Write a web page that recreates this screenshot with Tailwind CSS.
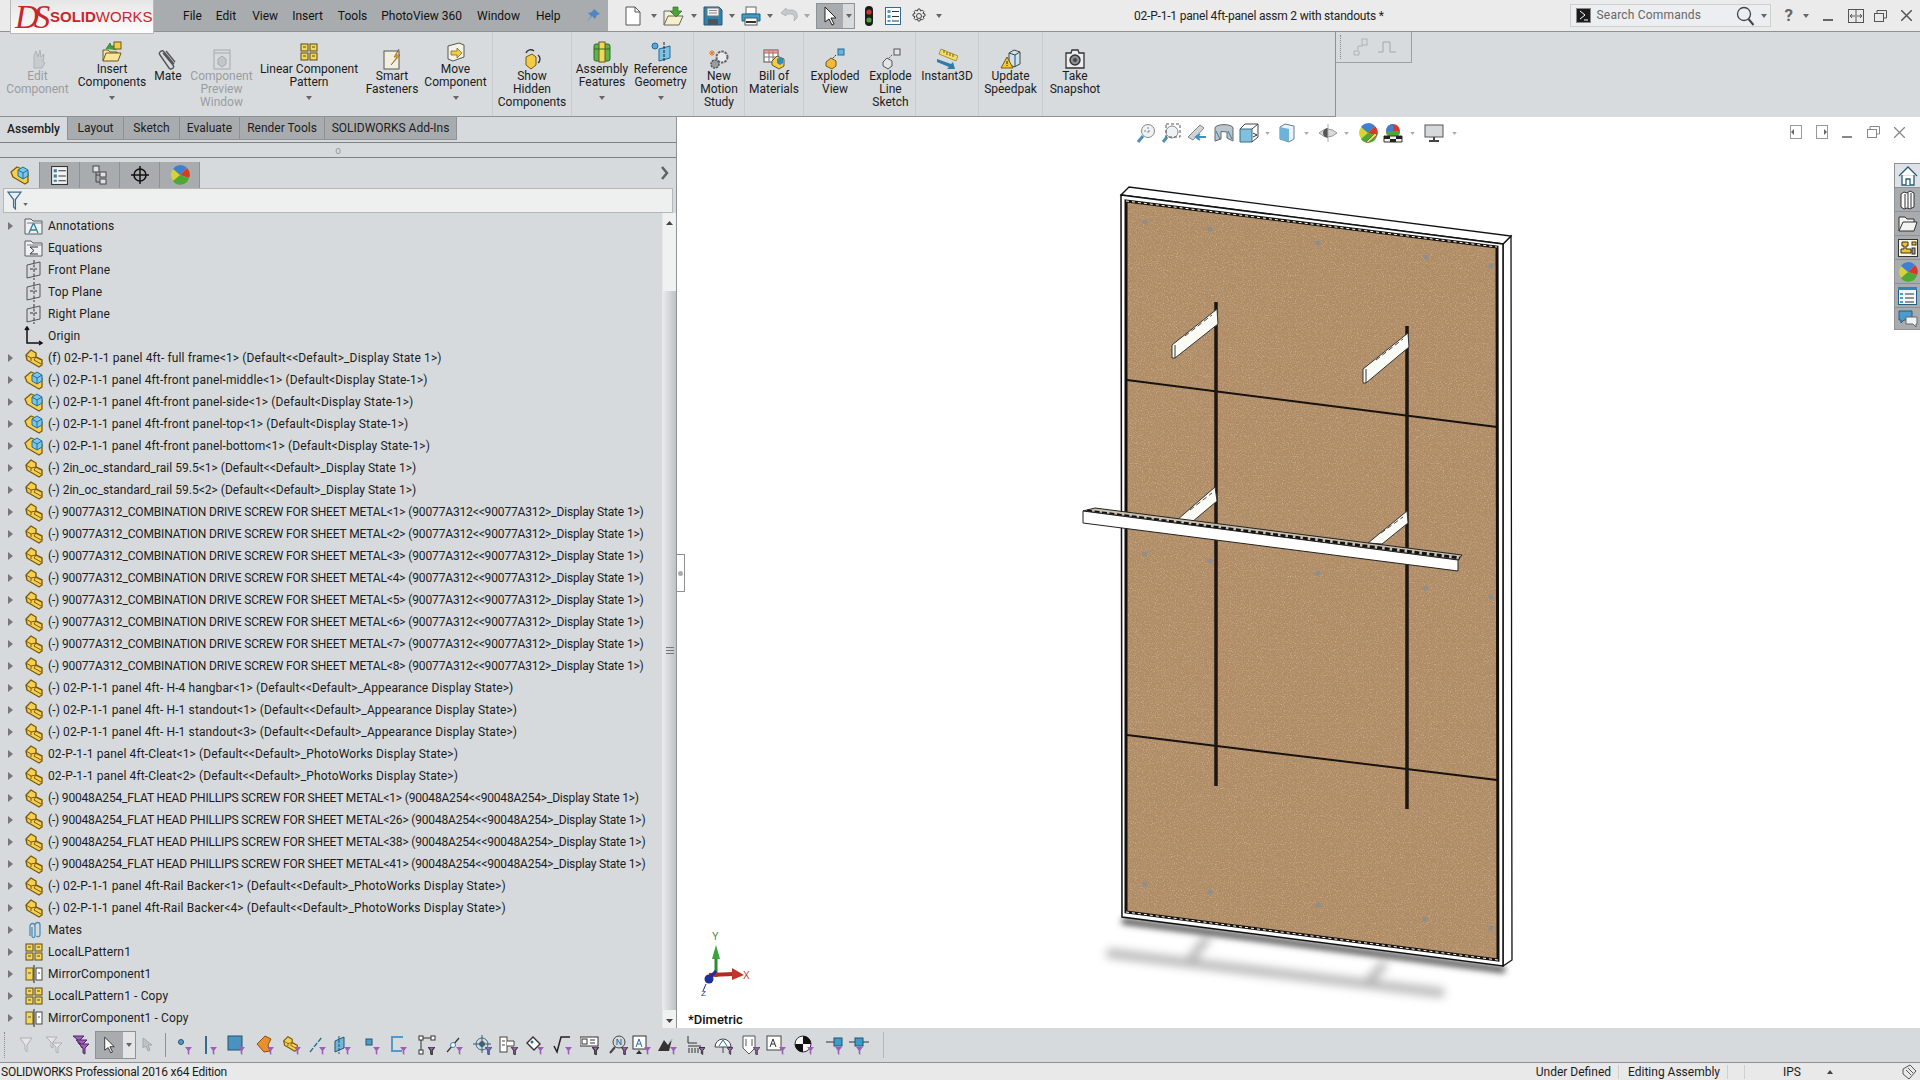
<!DOCTYPE html>
<html lang="en">
<head>
  <meta charset="UTF-8">
  <title>SOLIDWORKS Professional 2016</title>
  <script src="https://cdn.jsdelivr.net/npm/@tailwindcss/browser@4"></script>
</head>
<body class="w-[1920px] h-[1080px] overflow-hidden flex flex-col bg-[#d6dadd] text-[12px] leading-[13px] text-[#1c1c1c] font-['Roboto',sans-serif]">

  <!-- Shared icons -->
  <svg class="absolute w-0 h-0">
    <defs>
      <symbol id="part" viewBox="0 0 20 20"><path d="M2 7 7 2l5 3v4l6 3v5l-3 2-12-7Z" fill="#f6d04c" stroke="#7b5b12" stroke-width="1.4" stroke-linejoin="round"/><path d="M2 7l5 3v3M7 10l5-1M12 9l-2 3 7 4" fill="none" stroke="#7b5b12"/></symbol>
      <symbol id="asm" viewBox="0 0 20 20"><path d="M1 7 7 2l5 2 6 4v9l-3 2-12-7Z" fill="#f6d04c" stroke="#7b5b12" stroke-width="1.3" stroke-linejoin="round"/><path d="M8 5l5-3 5 3v6l-5 3-5-3Z" fill="#7cc4e8" stroke="#1f6f9c"/><path d="M8 5l5 3 5-3M13 8v6" fill="none" stroke="#1f6f9c"/></symbol>
      <symbol id="plane" viewBox="0 0 20 20"><path d="M3 5l13-3v13L3 18Z" fill="none" stroke="#555"/><path d="M10 0v20M6 9h7" stroke="#333" stroke-dasharray="3 1.5" fill="none"/></symbol>
      <symbol id="pattern" viewBox="0 0 20 20"><g fill="#f3d65e" stroke="#5d4a10"><rect x="2" y="2" width="7" height="7"/><rect x="11" y="2" width="7" height="7"/><rect x="2" y="11" width="7" height="7"/><rect x="11" y="11" width="7" height="7"/></g><path d="M4 5h3M13 5h3M4 14h3M13 14h3" stroke="#5d4a10"/></symbol>
      <symbol id="mirror" viewBox="0 0 20 20"><rect x="2" y="4" width="7" height="12" fill="#f3d65e" stroke="#6d5a14"/><path d="M10 1v18" stroke="#222"/><rect x="12" y="4" width="6" height="12" fill="#fff" stroke="#444"/><path d="M4 9h3M14 9h2" stroke="#555"/></symbol>
      <symbol id="folder" viewBox="0 0 20 20"><path d="M1 18V3h6l2 2h9v13Z" fill="#eef1f3" stroke="#5c5c5c"/><path d="M3 7h15" stroke="#7a7a7a"/></symbol>
      <symbol id="clip" viewBox="0 0 20 20"><path d="M6 16V6a2.5 2.5 0 015 0v10a1.5 1.5 0 01-3 0V7M11 5a2.5 2.5 0 015 0v10a2 2 0 01-3.5 1" fill="none" stroke="#4d8eb8" stroke-width="1.3"/></symbol>
      <symbol id="drop" viewBox="0 0 6 4"><path d="M0 0h6L3 4Z" fill="#666"/></symbol>
      <symbol id="funnel" viewBox="0 0 6 7"><path d="M0 0h6L3.7 3v4L2.3 6V3Z" fill="#a05cb8"/></symbol>
      <symbol id="rgb" viewBox="0 0 20 20"><circle cx="10" cy="10" r="9" fill="#d8d23a"/><path d="M10 10 3 4a9 9 0 0114-1Z" fill="#3f7fd1"/><path d="M10 10 17 3a9 9 0 012 10Z" fill="#d63a2f"/><path d="M10 10 19 13a9 9 0 01-16 3Z" fill="#4ea838"/></symbol>
    </defs>
  </svg>

  <!-- Title bar -->
  <header class="h-[32px] shrink-0 flex items-center bg-[#ebebeb] border-b border-[#8f9295] relative">
    <div class="w-[10px] h-full"></div>
    <div class="w-[144px] h-[34px] self-start shrink-0 bg-gradient-to-b from-[#e6e6e6] to-[#fdfdfd] border-b border-x border-[#b9b9b9] flex items-center pl-[4px] relative z-10">
      <span class="font-['Liberation_Serif',serif] italic text-[#c8262c] text-[33px] tracking-[-5px] leading-[30px] w-[33px]">DS</span>
      <span class="ml-[2px] font-['Liberation_Sans',sans-serif] text-[#c8262c] text-[15px] font-bold">SOLID<span class="font-normal">WORKS</span></span>
    </div>
    <nav class="w-[454px] h-full pt-[1px] bg-[#a9acaf] flex items-center text-[#111]">
      <span class="ml-[29px]">File</span>
      <span class="ml-[14px]">Edit</span>
      <span class="ml-[16px]">View</span>
      <span class="ml-[14px]">Insert</span>
      <span class="ml-[15px]">Tools</span>
      <span class="ml-[14px]">PhotoView 360</span>
      <span class="ml-[15px]">Window</span>
      <span class="ml-[16px]">Help</span>
      <svg class="ml-[24px]" width="16" height="16" viewBox="0 0 16 16"><path d="M9 1l6 5-3 1-2 4-3-3-5 6 4-6-3-3 4-1Z" fill="#4f86c6"/></svg>
    </nav>
    <!-- Quick access -->
    <div class="flex items-center h-full">
      <svg class="ml-[17px]" width="16" height="20" viewBox="0 0 16 20"><path d="M1 1h9l5 5v13H1Z" fill="#fff" stroke="#555"/><path d="M10 1v5h5" fill="none" stroke="#555"/></svg>
      <svg class="ml-[10px]" width="6" height="4"><use href="#drop"/></svg>
      <svg class="ml-[6px]" width="22" height="20" viewBox="0 0 22 20"><path d="M1 19V5h6l2 2h6v3" fill="#f4f0d8" stroke="#666"/><path d="M1 19l4-9h15l-4 9Z" fill="#f6efc8" stroke="#666"/><path d="M10 1h5v4h4l-6 6-6-6h3Z" fill="#4aa43a" stroke="#2b6d22" stroke-width=".7"/></svg>
      <svg class="ml-[6px]" width="6" height="4"><use href="#drop"/></svg>
      <svg class="ml-[6px]" width="20" height="20" viewBox="0 0 20 20"><path d="M1 1h15l3 3v15H1Z" fill="#2d83ad" stroke="#235a7a"/><rect x="4" y="2" width="12" height="8" fill="#f2f2f2" stroke="#777"/><path d="M6 4.5h8M6 7h8" stroke="#888"/><rect x="5" y="13" width="10" height="6" fill="#49565e"/></svg>
      <svg class="ml-[6px]" width="6" height="4"><use href="#drop"/></svg>
      <svg class="ml-[6px]" width="20" height="20" viewBox="0 0 20 20"><rect x="5" y="1" width="10" height="7" fill="#fff" stroke="#666"/><path d="M1 8h18v7H1Z" fill="#38a0cf" stroke="#235f7f"/><rect x="4" y="12" width="12" height="7" fill="#fff" stroke="#555"/><path d="M5 16h10" stroke="#333" stroke-width="2"/></svg>
      <svg class="ml-[6px]" width="6" height="4"><use href="#drop"/></svg>
      <svg class="ml-[7px]" width="18" height="18" viewBox="0 0 18 18"><path d="M5 2 1 6l5 3V7h5c3 0 4 2 3 7l3-3c1-6-2-8-6-8H6V1Z" fill="#c6cacc" stroke="#b3b6b8"/></svg>
      <svg class="ml-[6px]" width="6" height="4"><use href="#drop" opacity=".5"/></svg>
      <div class="ml-[6px] w-[39px] h-[26px] flex border border-[#8f9295]">
        <div class="w-[26px] bg-[#a9acaf] flex items-center justify-center"><svg width="15" height="20" viewBox="0 0 15 20"><path d="M2 1v15l4-3 3 6 2-1-3-6h5Z" fill="#fff" stroke="#222"/></svg></div>
        <div class="flex-1 bg-[#d8dadc] flex items-center justify-center"><svg width="6" height="4"><use href="#drop"/></svg></div>
      </div>
      <svg class="ml-[9px]" width="10" height="20" viewBox="0 0 10 20"><rect x="1" y="0" width="8" height="20" rx="4" fill="#1c1c1c"/><circle cx="5" cy="6" r="2.6" fill="#c63a30"/><circle cx="5" cy="14" r="2.6" fill="#4aa43a"/></svg>
      <svg class="ml-[11px]" width="16" height="18" viewBox="0 0 16 18"><rect x=".5" y=".5" width="15" height="17" fill="#fff" stroke="#2c6f92"/><g fill="#4d9bc1"><rect x="2.5" y="3" width="3" height="3"/><rect x="2.5" y="8" width="3" height="3"/><rect x="2.5" y="13" width="3" height="2"/></g><path d="M7 4.5h7M7 9.5h7M7 14h7" stroke="#333"/></svg>
      <svg class="ml-[10px]" width="16" height="16" viewBox="0 0 16 16" fill="none" stroke="#444"><circle cx="8" cy="8" r="2.5"/><path d="M7 1h2l.5 2 2-.8 1.4 1.4-.9 1.9 2 .5v2l-2 .5.9 1.9-1.4 1.400-2-.8-.5 2H7l-.5-2-2 .8-1.4-1.4.9-1.9-2-.5v-2l2-.5-.9-1.9 1.4-1.4 2 .8Z"/></svg>
      <svg class="ml-[9px]" width="6" height="4"><use href="#drop"/></svg>
    </div>
    <div class="absolute left-[1134px] top-0 h-full pt-[1px] flex items-center text-[#222] tracking-[-.2px]">02-P-1-1 panel 4ft-panel assm 2 with standouts *</div>
    <!-- Search and window buttons -->
    <div class="ml-auto flex items-center h-full">
      <div class="w-[201px] h-[23px] border border-[#cfcfcf] bg-[#eceef1] flex items-center pl-[5px]">
        <div class="w-[15px] h-[15px] bg-[#1b1b1b] border border-[#888] flex items-center"><svg width="13" height="13" viewBox="0 0 13 13" fill="none" stroke="#fff"><path d="M3 2l5 4-5 4M7 11h4"/></svg></div>
        <span class="ml-[6px] text-[#666] tracking-[.2px]">Search Commands</span>
        <svg class="ml-auto" width="20" height="20" viewBox="0 0 20 20" fill="none" stroke="#444" stroke-width="1.3"><circle cx="8" cy="8" r="6.5"/><path d="M12.5 13l5 6" stroke-width="2"/></svg>
        <svg class="ml-[5px] mr-[3px]" width="6" height="4"><use href="#drop"/></svg>
      </div>
      <span class="ml-[14px] text-[17px] font-bold text-[#666]">?</span>
      <svg class="ml-[10px]" width="6" height="4"><use href="#drop"/></svg>
      <svg class="ml-[14px]" width="11" height="11" viewBox="0 0 11 11"><path d="M0 9h10v2H0Z" fill="#666"/></svg>
      <svg class="ml-[14px]" width="16" height="14" viewBox="0 0 16 14" fill="none" stroke="#555"><rect x=".5" y=".5" width="15" height="13"/><path d="M8 1v12M2 7h5M9 7h5M4 5 2 7l2 2M12 5l2 2-2 2"/></svg>
      <svg class="ml-[10px]" width="13" height="12" viewBox="0 0 13 12" fill="none" stroke="#555"><rect x=".5" y="3.5" width="9" height="8"/><path d="M3 3V.5h9.5V8H10"/></svg>
      <svg class="ml-[14px] mr-[8px]" width="11" height="11" viewBox="0 0 11 11" fill="none" stroke="#555" stroke-width="1.5"><path d="M0 0l11 11M11 0 0 11"/></svg>
    </div>
  </header>

  <!-- Command manager -->
  <section class="h-[85px] shrink-0 flex bg-[#d7dbde]">
    <div class="w-[1336px] flex border-r border-b border-[#8f9295] text-center">
      <div class="w-[75px] pt-[16px] flex flex-col items-center text-[#9a9da0]">
        <svg width="22" height="22" viewBox="0 0 22 22" fill="#c9cccf" stroke="#b0b3b6"><path d="M7 20V8l2-5 2 6 2-7 1 7 3-3-1 8 2 1-3 5Z"/></svg>
        <span>Edit<br>Component</span>
      </div>
      <div class="w-[74px] pt-[9px] flex flex-col items-center">
        <svg width="22" height="22" viewBox="0 0 22 22"><path d="M2 20V9h5l2 2h7v2" fill="#f3e7a8" stroke="#6b5a17"/><path d="M2 20l3-8h15l-3 8Z" fill="#f6e59a" stroke="#6b5a17"/><path d="M5 8l4-6 1 3h5v4" fill="#3fa23a" stroke="#246b20" stroke-width=".7"/><rect x="13" y="1" width="7" height="7" fill="#f3cb45" stroke="#6b5a17"/></svg>
        <span>Insert<br>Components</span>
        <svg class="mt-[7px]" width="6" height="4"><use href="#drop"/></svg>
      </div>
      <div class="w-[38px] pt-[16px] flex flex-col items-center">
        <svg width="22" height="22" viewBox="0 0 22 22" fill="none" stroke="#555" stroke-width="1.4"><path d="M6 5l10 12a2.5 2.5 0 01-4 3L3 7a2.5 2.5 0 014-3l10 12M9 3l9 11"/></svg>
        <span>Mate</span>
      </div>
      <div class="w-[69px] pt-[16px] flex flex-col items-center text-[#9a9da0]">
        <svg width="22" height="22" viewBox="0 0 22 22" fill="#d7dbde" stroke="#a6a9ac"><rect x="3" y="2" width="16" height="19"/><path d="M3 5h16"/><path d="M7 11l4-3 4 3v5l-4 3-4-3Z" fill="#c3c6c9"/></svg>
        <span>Component<br>Preview<br>Window</span>
      </div>
      <div class="w-[106px] pt-[9px] flex flex-col items-center">
        <svg width="20" height="22" viewBox="0 0 20 20"><use href="#pattern"/></svg>
        <span>Linear Component<br>Pattern</span>
        <svg class="mt-[7px]" width="6" height="4"><use href="#drop"/></svg>
      </div>
      <div class="w-[60px] pt-[16px] flex flex-col items-center">
        <svg width="22" height="22" viewBox="0 0 22 22"><rect x="3" y="3" width="15" height="18" fill="#f3efe0" stroke="#555"/><path d="M18 1l-5 8h3l-6 8 9-10h-4Z" fill="#eea920" stroke="#8a5b10" stroke-width=".6"/></svg>
        <span>Smart<br>Fasteners</span>
      </div>
      <div class="w-[71px] pr-[3px] pt-[9px] flex flex-col items-center border-r border-[#c9cdd0]">
        <svg width="22" height="22" viewBox="0 0 22 22"><path d="M3 5l11-3 5 2v12L8 20l-5-2Z" fill="#f7f3e4" stroke="#555"/><path d="M6 10h6V7l5 5-5 5v-3H6Z" fill="#f3cb45" stroke="#6b5a17" stroke-width=".7"/></svg>
        <span>Move<br>Component</span>
        <svg class="mt-[7px]" width="6" height="4"><use href="#drop"/></svg>
      </div>
      <div class="w-[79px] pt-[16px] flex flex-col items-center border-r border-[#c9cdd0]">
        <svg width="22" height="22" viewBox="0 0 22 22"><path d="M5 9l6-3 4 3v8l-5 4-5-4Z" fill="#f3cb45" stroke="#6b5a17"/><path d="M5 5a5 5 0 018-2M17 7a5 5 0 010 8" fill="none" stroke="#333" stroke-width="1.4"/></svg>
        <span>Show<br>Hidden<br>Components</span>
      </div>
      <div class="w-[60px] pt-[9px] flex flex-col items-center">
        <svg width="22" height="22" viewBox="0 0 22 22"><rect x="3" y="3" width="16" height="17" rx="2" fill="#5eb34a" stroke="#2d6e24"/><rect x="8" y="1" width="6" height="20" fill="#f4d65a" stroke="#6b5a17"/><path d="M3 8h16" stroke="#2d6e24"/></svg>
        <span>Assembly<br>Features</span>
        <svg class="mt-[7px]" width="6" height="4"><use href="#drop"/></svg>
      </div>
      <div class="w-[62px] pr-[4px] pt-[9px] flex flex-col items-center border-r border-[#c9cdd0]">
        <svg width="22" height="22" viewBox="0 0 22 22"><circle cx="5" cy="5" r="3" fill="#5ba8d6" stroke="#1d6a99"/><path d="M9 8l11-3v12L9 20Z" fill="#7fc1e4" stroke="#1d6a99"/><path d="M14 1v20" stroke="#123" stroke-dasharray="3 1"/></svg>
        <span>Reference<br>Geometry</span>
        <svg class="mt-[7px]" width="6" height="4"><use href="#drop"/></svg>
      </div>
      <div class="w-[51px] pt-[16px] flex flex-col items-center border-r border-[#c9cdd0]">
        <svg width="22" height="22" viewBox="0 0 22 22"><circle cx="14" cy="9" r="5.5" fill="#e8eaec" stroke="#666" stroke-width="2" stroke-dasharray="2.5 1"/><circle cx="7" cy="16" r="4" fill="#9a9da0" stroke="#555" stroke-width="1.5" stroke-dasharray="2 1"/><path d="M4 2v6M1 5h6M2 3l4 4M6 3 2 7" stroke="#e8791c"/></svg>
        <span>New<br>Motion<br>Study</span>
      </div>
      <div class="w-[59px] pt-[16px] flex flex-col items-center border-r border-[#c9cdd0]">
        <svg width="22" height="22" viewBox="0 0 22 22"><rect x="1" y="2" width="14" height="12" fill="#fff" stroke="#555"/><path d="M1 5h14M1 9h14M6 2v12M10 2v12" stroke="#777"/><path d="M1 2h14v3H1Z" fill="#d97a6c" opacity=".7"/><path d="M9 13l5-5 7 3v7l-5 3-7-4Z" fill="#f3cb45" stroke="#6b5a17"/><path d="M14 11l3-2 3 2v4l-3 2-3-2Z" fill="#2f8cbf"/></svg>
        <span>Bill of<br>Materials</span>
      </div>
      <div class="w-[62px] pt-[16px] flex flex-col items-center">
        <svg width="22" height="22" viewBox="0 0 22 22"><rect x="14" y="1" width="6" height="6" fill="#6ab3da" stroke="#1d6a99"/><path d="M12 7 8 11" stroke="#333" stroke-dasharray="2 1"/><path d="M2 14l5-4 5 3v5l-4 3-6-3Z" fill="#f3b93a" stroke="#6b5a17"/></svg>
        <span>Exploded<br>View</span>
      </div>
      <div class="w-[50px] pt-[16px] flex flex-col items-center border-r border-[#c9cdd0]">
        <svg width="22" height="22" viewBox="0 0 22 22" fill="#e2e4e6" stroke="#555"><rect x="14" y="1" width="6" height="6"/><path d="M12 7 8 11" stroke-dasharray="2 1"/><path d="M3 14l4-4 5 3v5l-4 3-5-3Z"/></svg>
        <span>Explode<br>Line<br>Sketch</span>
      </div>
      <div class="w-[63px] pt-[16px] flex flex-col items-center border-r border-[#c9cdd0]">
        <svg width="22" height="22" viewBox="0 0 22 22"><path d="M5 1l17 7-2 5L3 6Z" fill="#f3dc6a" stroke="#8a7514" stroke-width=".7"/><path d="M8 2v3M11 4v3M14 5v3M17 6v3" stroke="#6e5e10"/><path d="M1 11l14 5 2-2 2 7h-8l2-2L1 14Z" fill="#2f7ca8"/></svg>
        <span>Instant3D</span>
      </div>
      <div class="w-[64px] pt-[16px] flex flex-col items-center border-r border-[#c9cdd0]">
        <svg width="22" height="22" viewBox="0 0 22 22"><path d="M9 5l5-3 6 2v12l-6 3-5-3Z" fill="#c9e3f1" stroke="#444"/><path d="M9 5l6 2 5-3M15 7v12" fill="none" stroke="#444"/><path d="M7 9l6 11H1Z" fill="#f3c832" stroke="#6b5a17"/><path d="M7 13v3M7 17v1" stroke="#222"/></svg>
        <span>Update<br>Speedpak</span>
      </div>
      <div class="w-[64px] pt-[16px] flex flex-col items-center">
        <svg width="22" height="22" viewBox="0 0 22 22"><path d="M2 5h5l1-3h6l1 3h5v15H2Z" fill="#eceef0" stroke="#333" stroke-width="1.3"/><circle cx="11" cy="12" r="5" fill="#8b8e91" stroke="#333" stroke-width="1.4"/><circle cx="11" cy="12" r="2" fill="#444"/></svg>
        <span>Take<br>Snapshot</span>
      </div>
    </div>
    <div class="w-[76px] h-[31px] border-r border-b border-[#9ea1a4] flex items-center pl-[4px]">
      <span class="h-[24px] border-l border-dotted border-[#888]"></span>
      <svg class="ml-[12px]" width="16" height="18" viewBox="0 0 16 18" fill="none" stroke="#b0b3b6"><rect x="9" y="1" width="5" height="6"/><path d="M10 8H5v5H1v4h5v-4"/></svg>
      <svg class="ml-[9px]" width="18" height="12" viewBox="0 0 18 12" fill="none" stroke="#a3a6a9"><path d="M0 11h5V1h7v10h6"/></svg>
    </div>
  </section>

  <!-- Work area -->
  <div class="flex-1 min-h-0 flex">

    <!-- Left panel -->
    <aside class="w-[677px] shrink-0 flex flex-col bg-[#d6dadd] border-r border-[#8f9295]">
      <nav class="h-[23px] shrink-0 flex">
        <span class="w-[67px] pt-[1px] flex items-center justify-center font-medium">Assembly</span>
        <span class="w-[56px] pt-[1px] flex items-center justify-center bg-[#a9acaf] border-l border-b border-[#8f9295]">Layout</span>
        <span class="w-[56px] pt-[1px] flex items-center justify-center bg-[#a9acaf] border-l border-b border-[#8f9295]">Sketch</span>
        <span class="w-[60px] pt-[1px] flex items-center justify-center bg-[#a9acaf] border-l border-b border-[#8f9295]">Evaluate</span>
        <span class="w-[85px] pt-[1px] flex items-center justify-center bg-[#a9acaf] border-l border-b border-[#8f9295]">Render Tools</span>
        <span class="w-[133px] pt-[1px] flex items-center justify-center bg-[#a9acaf] border-x border-b border-[#8f9295]">SOLIDWORKS Add-Ins</span>
      </nav>
      <div class="h-[16px] mt-[2px] shrink-0 border-y border-[#7f8285] flex items-center justify-center text-[#9a9da0] text-[10px]">o</div>
      <div class="h-[26px] mt-[4px] shrink-0 flex relative">
        <span class="w-[39px] flex items-center justify-center">
          <svg width="20" height="20" viewBox="0 0 20 20"><use href="#asm"/></svg>
        </span>
        <span class="w-[40px] flex items-center justify-center bg-[#a9acaf] border-l border-[#8f9295]">
          <svg width="17" height="19" viewBox="0 0 16 18"><rect x=".5" y=".5" width="15" height="17" fill="#f2f2f2" stroke="#333"/><g fill="#4d7f99"><rect x="2.5" y="3" width="3" height="3"/><rect x="2.5" y="8" width="3" height="3"/><rect x="2.5" y="13" width="3" height="2"/></g><path d="M7 4.5h7M7 9.5h7M7 14h7" stroke="#333"/></svg>
        </span>
        <span class="w-[40px] flex items-center justify-center bg-[#a9acaf] border-l border-[#8f9295]">
          <svg width="16" height="20" viewBox="0 0 16 20" fill="#dfe2e4" stroke="#444"><rect x="1" y="1" width="6" height="6"/><rect x="8" y="7" width="6" height="5"/><rect x="8" y="14" width="6" height="5"/><path d="M4 7v10h4M4 10h4" fill="none"/></svg>
        </span>
        <span class="w-[40px] flex items-center justify-center bg-[#a9acaf] border-l border-[#8f9295]">
          <svg width="18" height="18" viewBox="0 0 18 18" fill="none" stroke="#111" stroke-width="1.5"><circle cx="9" cy="9" r="6"/><path d="M9 0v18M0 9h18"/></svg>
        </span>
        <span class="w-[41px] flex items-center justify-center bg-[#a9acaf] border-x border-[#8f9295]">
          <svg width="20" height="20" viewBox="0 0 20 20"><use href="#rgb"/></svg>
        </span>
        <svg class="absolute left-[660px] top-[4px]" width="10" height="14" viewBox="0 0 10 14" fill="none" stroke="#5f6366" stroke-width="2.5"><path d="M2 1l5 6-5 6"/></svg>
      </div>
      <!-- Filter -->
      <div class="h-[25px] shrink-0 ml-[3px] mr-[3px] bg-[#eef0f0] border border-[#b4b7ba] flex items-center pl-[3px]">
        <svg width="15" height="19" viewBox="0 0 16 20"><path d="M1 1h14L9 9v10L7 17V9Z" fill="#e8f1f6" stroke="#3f6b86" stroke-width="1.3"/></svg>
        <svg class="ml-[1px] mt-[8px]" width="5" height="3"><use href="#drop"/></svg>
      </div>
      <!-- Tree -->
      <div class="flex-1 min-h-0 flex">
        <div class="flex-1 min-w-0 pt-[2px] overflow-hidden whitespace-nowrap tracking-[.13px]">
          <div class="h-[22px] flex items-center"><svg class="ml-[8px] mr-[11px]" width="5" height="8"><path d="M0 0l5 4-5 4Z" fill="#777"/></svg><svg class="w-[20px] h-[20px]" viewBox="0 0 20 20"><use href="#folder"/><path d="M5 17l4-9h1l4 9M7 14h5" fill="none" stroke="#2e7f98" stroke-width="1.3"/></svg><span class="ml-[4px]">Annotations</span></div>
          <div class="h-[22px] flex items-center pl-[24px]"><svg class="w-[20px] h-[20px]" viewBox="0 0 20 20"><use href="#folder"/><path d="M14 9H6l4 3.5L6 16h8" fill="none" stroke="#333"/></svg><span class="ml-[4px]">Equations</span></div>
          <div class="h-[22px] flex items-center pl-[24px]"><svg class="w-[20px] h-[20px]" viewBox="0 0 20 20"><use href="#plane"/></svg><span class="ml-[4px]">Front Plane</span></div>
          <div class="h-[22px] flex items-center pl-[24px]"><svg class="w-[20px] h-[20px]" viewBox="0 0 20 20"><use href="#plane"/></svg><span class="ml-[4px]">Top Plane</span></div>
          <div class="h-[22px] flex items-center pl-[24px]"><svg class="w-[20px] h-[20px]" viewBox="0 0 20 20"><use href="#plane"/></svg><span class="ml-[4px]">Right Plane</span></div>
          <div class="h-[22px] flex items-center pl-[24px]"><svg class="w-[20px] h-[20px]" viewBox="0 0 20 20"><path d="M3 1v16h15M1 4l2-3 2 3M15 15l3 2-3 2" fill="none" stroke="#111" stroke-width="1.5"/></svg><span class="ml-[4px]">Origin</span></div>
          <div class="h-[22px] flex items-center"><svg class="ml-[8px] mr-[11px]" width="5" height="8"><path d="M0 0l5 4-5 4Z" fill="#777"/></svg><svg class="w-[20px] h-[20px]" viewBox="0 0 20 20"><use href="#part"/></svg><span class="ml-[4px]">(f) 02-P-1-1 panel 4ft- full frame&lt;1&gt; (Default&lt;&lt;Default&gt;_Display State 1&gt;)</span></div>
          <div class="h-[22px] flex items-center"><svg class="ml-[8px] mr-[11px]" width="5" height="8"><path d="M0 0l5 4-5 4Z" fill="#777"/></svg><svg class="w-[20px] h-[20px]" viewBox="0 0 20 20"><use href="#asm"/></svg><span class="ml-[4px]">(-) 02-P-1-1 panel 4ft-front panel-middle&lt;1&gt; (Default&lt;Display State-1&gt;)</span></div>
          <div class="h-[22px] flex items-center"><svg class="ml-[8px] mr-[11px]" width="5" height="8"><path d="M0 0l5 4-5 4Z" fill="#777"/></svg><svg class="w-[20px] h-[20px]" viewBox="0 0 20 20"><use href="#asm"/></svg><span class="ml-[4px]">(-) 02-P-1-1 panel 4ft-front panel-side&lt;1&gt; (Default&lt;Display State-1&gt;)</span></div>
          <div class="h-[22px] flex items-center"><svg class="ml-[8px] mr-[11px]" width="5" height="8"><path d="M0 0l5 4-5 4Z" fill="#777"/></svg><svg class="w-[20px] h-[20px]" viewBox="0 0 20 20"><use href="#asm"/></svg><span class="ml-[4px]">(-) 02-P-1-1 panel 4ft-front panel-top&lt;1&gt; (Default&lt;Display State-1&gt;)</span></div>
          <div class="h-[22px] flex items-center"><svg class="ml-[8px] mr-[11px]" width="5" height="8"><path d="M0 0l5 4-5 4Z" fill="#777"/></svg><svg class="w-[20px] h-[20px]" viewBox="0 0 20 20"><use href="#asm"/></svg><span class="ml-[4px]">(-) 02-P-1-1 panel 4ft-front panel-bottom&lt;1&gt; (Default&lt;Display State-1&gt;)</span></div>
          <div class="h-[22px] flex items-center"><svg class="ml-[8px] mr-[11px]" width="5" height="8"><path d="M0 0l5 4-5 4Z" fill="#777"/></svg><svg class="w-[20px] h-[20px]" viewBox="0 0 20 20"><use href="#part"/></svg><span class="ml-[4px] tracking-[.02px]">(-) 2in_oc_standard_rail 59.5&lt;1&gt; (Default&lt;&lt;Default&gt;_Display State 1&gt;)</span></div>
          <div class="h-[22px] flex items-center"><svg class="ml-[8px] mr-[11px]" width="5" height="8"><path d="M0 0l5 4-5 4Z" fill="#777"/></svg><svg class="w-[20px] h-[20px]" viewBox="0 0 20 20"><use href="#part"/></svg><span class="ml-[4px] tracking-[.02px]">(-) 2in_oc_standard_rail 59.5&lt;2&gt; (Default&lt;&lt;Default&gt;_Display State 1&gt;)</span></div>
          <div class="h-[22px] flex items-center"><svg class="ml-[8px] mr-[11px]" width="5" height="8"><path d="M0 0l5 4-5 4Z" fill="#777"/></svg><svg class="w-[20px] h-[20px]" viewBox="0 0 20 20"><use href="#part"/></svg><span class="ml-[4px] tracking-[-.15px]">(-) 90077A312_COMBINATION DRIVE SCREW FOR SHEET METAL&lt;1&gt; (90077A312&lt;&lt;90077A312&gt;_Display State 1&gt;)</span></div>
          <div class="h-[22px] flex items-center"><svg class="ml-[8px] mr-[11px]" width="5" height="8"><path d="M0 0l5 4-5 4Z" fill="#777"/></svg><svg class="w-[20px] h-[20px]" viewBox="0 0 20 20"><use href="#part"/></svg><span class="ml-[4px] tracking-[-.15px]">(-) 90077A312_COMBINATION DRIVE SCREW FOR SHEET METAL&lt;2&gt; (90077A312&lt;&lt;90077A312&gt;_Display State 1&gt;)</span></div>
          <div class="h-[22px] flex items-center"><svg class="ml-[8px] mr-[11px]" width="5" height="8"><path d="M0 0l5 4-5 4Z" fill="#777"/></svg><svg class="w-[20px] h-[20px]" viewBox="0 0 20 20"><use href="#part"/></svg><span class="ml-[4px] tracking-[-.15px]">(-) 90077A312_COMBINATION DRIVE SCREW FOR SHEET METAL&lt;3&gt; (90077A312&lt;&lt;90077A312&gt;_Display State 1&gt;)</span></div>
          <div class="h-[22px] flex items-center"><svg class="ml-[8px] mr-[11px]" width="5" height="8"><path d="M0 0l5 4-5 4Z" fill="#777"/></svg><svg class="w-[20px] h-[20px]" viewBox="0 0 20 20"><use href="#part"/></svg><span class="ml-[4px] tracking-[-.15px]">(-) 90077A312_COMBINATION DRIVE SCREW FOR SHEET METAL&lt;4&gt; (90077A312&lt;&lt;90077A312&gt;_Display State 1&gt;)</span></div>
          <div class="h-[22px] flex items-center"><svg class="ml-[8px] mr-[11px]" width="5" height="8"><path d="M0 0l5 4-5 4Z" fill="#777"/></svg><svg class="w-[20px] h-[20px]" viewBox="0 0 20 20"><use href="#part"/></svg><span class="ml-[4px] tracking-[-.15px]">(-) 90077A312_COMBINATION DRIVE SCREW FOR SHEET METAL&lt;5&gt; (90077A312&lt;&lt;90077A312&gt;_Display State 1&gt;)</span></div>
          <div class="h-[22px] flex items-center"><svg class="ml-[8px] mr-[11px]" width="5" height="8"><path d="M0 0l5 4-5 4Z" fill="#777"/></svg><svg class="w-[20px] h-[20px]" viewBox="0 0 20 20"><use href="#part"/></svg><span class="ml-[4px] tracking-[-.15px]">(-) 90077A312_COMBINATION DRIVE SCREW FOR SHEET METAL&lt;6&gt; (90077A312&lt;&lt;90077A312&gt;_Display State 1&gt;)</span></div>
          <div class="h-[22px] flex items-center"><svg class="ml-[8px] mr-[11px]" width="5" height="8"><path d="M0 0l5 4-5 4Z" fill="#777"/></svg><svg class="w-[20px] h-[20px]" viewBox="0 0 20 20"><use href="#part"/></svg><span class="ml-[4px] tracking-[-.15px]">(-) 90077A312_COMBINATION DRIVE SCREW FOR SHEET METAL&lt;7&gt; (90077A312&lt;&lt;90077A312&gt;_Display State 1&gt;)</span></div>
          <div class="h-[22px] flex items-center"><svg class="ml-[8px] mr-[11px]" width="5" height="8"><path d="M0 0l5 4-5 4Z" fill="#777"/></svg><svg class="w-[20px] h-[20px]" viewBox="0 0 20 20"><use href="#part"/></svg><span class="ml-[4px] tracking-[-.15px]">(-) 90077A312_COMBINATION DRIVE SCREW FOR SHEET METAL&lt;8&gt; (90077A312&lt;&lt;90077A312&gt;_Display State 1&gt;)</span></div>
          <div class="h-[22px] flex items-center"><svg class="ml-[8px] mr-[11px]" width="5" height="8"><path d="M0 0l5 4-5 4Z" fill="#777"/></svg><svg class="w-[20px] h-[20px]" viewBox="0 0 20 20"><use href="#part"/></svg><span class="ml-[4px]">(-) 02-P-1-1 panel 4ft- H-4 hangbar&lt;1&gt; (Default&lt;&lt;Default&gt;_Appearance Display State&gt;)</span></div>
          <div class="h-[22px] flex items-center"><svg class="ml-[8px] mr-[11px]" width="5" height="8"><path d="M0 0l5 4-5 4Z" fill="#777"/></svg><svg class="w-[20px] h-[20px]" viewBox="0 0 20 20"><use href="#part"/></svg><span class="ml-[4px]">(-) 02-P-1-1 panel 4ft- H-1 standout&lt;1&gt; (Default&lt;&lt;Default&gt;_Appearance Display State&gt;)</span></div>
          <div class="h-[22px] flex items-center"><svg class="ml-[8px] mr-[11px]" width="5" height="8"><path d="M0 0l5 4-5 4Z" fill="#777"/></svg><svg class="w-[20px] h-[20px]" viewBox="0 0 20 20"><use href="#part"/></svg><span class="ml-[4px]">(-) 02-P-1-1 panel 4ft- H-1 standout&lt;3&gt; (Default&lt;&lt;Default&gt;_Appearance Display State&gt;)</span></div>
          <div class="h-[22px] flex items-center"><svg class="ml-[8px] mr-[11px]" width="5" height="8"><path d="M0 0l5 4-5 4Z" fill="#777"/></svg><svg class="w-[20px] h-[20px]" viewBox="0 0 20 20"><use href="#part"/></svg><span class="ml-[4px]">02-P-1-1 panel 4ft-Cleat&lt;1&gt; (Default&lt;&lt;Default&gt;_PhotoWorks Display State&gt;)</span></div>
          <div class="h-[22px] flex items-center"><svg class="ml-[8px] mr-[11px]" width="5" height="8"><path d="M0 0l5 4-5 4Z" fill="#777"/></svg><svg class="w-[20px] h-[20px]" viewBox="0 0 20 20"><use href="#part"/></svg><span class="ml-[4px]">02-P-1-1 panel 4ft-Cleat&lt;2&gt; (Default&lt;&lt;Default&gt;_PhotoWorks Display State&gt;)</span></div>
          <div class="h-[22px] flex items-center"><svg class="ml-[8px] mr-[11px]" width="5" height="8"><path d="M0 0l5 4-5 4Z" fill="#777"/></svg><svg class="w-[20px] h-[20px]" viewBox="0 0 20 20"><use href="#part"/></svg><span class="ml-[4px] tracking-[-.18px]">(-) 90048A254_FLAT HEAD PHILLIPS SCREW FOR SHEET METAL&lt;1&gt; (90048A254&lt;&lt;90048A254&gt;_Display State 1&gt;)</span></div>
          <div class="h-[22px] flex items-center"><svg class="ml-[8px] mr-[11px]" width="5" height="8"><path d="M0 0l5 4-5 4Z" fill="#777"/></svg><svg class="w-[20px] h-[20px]" viewBox="0 0 20 20"><use href="#part"/></svg><span class="ml-[4px] tracking-[-.18px]">(-) 90048A254_FLAT HEAD PHILLIPS SCREW FOR SHEET METAL&lt;26&gt; (90048A254&lt;&lt;90048A254&gt;_Display State 1&gt;)</span></div>
          <div class="h-[22px] flex items-center"><svg class="ml-[8px] mr-[11px]" width="5" height="8"><path d="M0 0l5 4-5 4Z" fill="#777"/></svg><svg class="w-[20px] h-[20px]" viewBox="0 0 20 20"><use href="#part"/></svg><span class="ml-[4px] tracking-[-.18px]">(-) 90048A254_FLAT HEAD PHILLIPS SCREW FOR SHEET METAL&lt;38&gt; (90048A254&lt;&lt;90048A254&gt;_Display State 1&gt;)</span></div>
          <div class="h-[22px] flex items-center"><svg class="ml-[8px] mr-[11px]" width="5" height="8"><path d="M0 0l5 4-5 4Z" fill="#777"/></svg><svg class="w-[20px] h-[20px]" viewBox="0 0 20 20"><use href="#part"/></svg><span class="ml-[4px] tracking-[-.18px]">(-) 90048A254_FLAT HEAD PHILLIPS SCREW FOR SHEET METAL&lt;41&gt; (90048A254&lt;&lt;90048A254&gt;_Display State 1&gt;)</span></div>
          <div class="h-[22px] flex items-center"><svg class="ml-[8px] mr-[11px]" width="5" height="8"><path d="M0 0l5 4-5 4Z" fill="#777"/></svg><svg class="w-[20px] h-[20px]" viewBox="0 0 20 20"><use href="#part"/></svg><span class="ml-[4px]">(-) 02-P-1-1 panel 4ft-Rail Backer&lt;1&gt; (Default&lt;&lt;Default&gt;_PhotoWorks Display State&gt;)</span></div>
          <div class="h-[22px] flex items-center"><svg class="ml-[8px] mr-[11px]" width="5" height="8"><path d="M0 0l5 4-5 4Z" fill="#777"/></svg><svg class="w-[20px] h-[20px]" viewBox="0 0 20 20"><use href="#part"/></svg><span class="ml-[4px]">(-) 02-P-1-1 panel 4ft-Rail Backer&lt;4&gt; (Default&lt;&lt;Default&gt;_PhotoWorks Display State&gt;)</span></div>
          <div class="h-[22px] flex items-center"><svg class="ml-[8px] mr-[11px]" width="5" height="8"><path d="M0 0l5 4-5 4Z" fill="#777"/></svg><svg class="w-[20px] h-[20px]" viewBox="0 0 20 20"><use href="#clip"/></svg><span class="ml-[4px]">Mates</span></div>
          <div class="h-[22px] flex items-center"><svg class="ml-[8px] mr-[11px]" width="5" height="8"><path d="M0 0l5 4-5 4Z" fill="#777"/></svg><svg class="w-[20px] h-[20px]" viewBox="0 0 20 20"><use href="#pattern"/></svg><span class="ml-[4px]">LocalLPattern1</span></div>
          <div class="h-[22px] flex items-center"><svg class="ml-[8px] mr-[11px]" width="5" height="8"><path d="M0 0l5 4-5 4Z" fill="#777"/></svg><svg class="w-[20px] h-[20px]" viewBox="0 0 20 20"><use href="#mirror"/></svg><span class="ml-[4px]">MirrorComponent1</span></div>
          <div class="h-[22px] flex items-center"><svg class="ml-[8px] mr-[11px]" width="5" height="8"><path d="M0 0l5 4-5 4Z" fill="#777"/></svg><svg class="w-[20px] h-[20px]" viewBox="0 0 20 20"><use href="#pattern"/></svg><span class="ml-[4px]">LocalLPattern1 - Copy</span></div>
          <div class="h-[22px] flex items-center"><svg class="ml-[8px] mr-[11px]" width="5" height="8"><path d="M0 0l5 4-5 4Z" fill="#777"/></svg><svg class="w-[20px] h-[20px]" viewBox="0 0 20 20"><use href="#mirror"/></svg><span class="ml-[4px]">MirrorComponent1 - Copy</span></div>
        </div>
        <!-- Scrollbar -->
        <div class="w-[14px] shrink-0 bg-[#f0f1f1] border-l border-[#e8e8e8] flex flex-col items-center">
          <div class="h-[20px] flex items-center"><svg width="7" height="4"><path d="M0 4h7L3.5 0Z" fill="#444"/></svg></div>
          <div class="mt-[58px] h-[719px] w-full bg-gradient-to-r from-[#e8eaeb] to-[#bfc3c6] flex items-center justify-center"><svg width="8" height="7"><path d="M0 .5h8M0 3.5h8M0 6.5h8" stroke="#777"/></svg></div>
          <div class="mt-auto h-[14px] flex items-center"><svg width="7" height="4"><path d="M0 0h7L3.5 4Z" fill="#444"/></svg></div>
        </div>
      </div>
    </aside>

    <!-- Graphics area -->
    <main class="flex-1 min-w-0 relative bg-white">
      <div class="absolute left-0 top-[437px] w-[8px] h-[38px] bg-white border border-l-0 border-[#8f9295] flex items-center justify-center z-10"><span class="w-[5px] h-[5px] rounded-full bg-[#a9acaf]"></span></div>

      <!-- Model -->
      <svg class="absolute inset-0" width="1243" height="911" viewBox="677 117 1243 911">
        <defs>
          <filter id="cork" filterUnits="userSpaceOnUse" x="1120" y="195" width="385" height="775"><feTurbulence type="fractalNoise" baseFrequency="0.85" numOctaves="2" seed="7"/><feColorMatrix values="0 0 0 0 1  0 0 0 0 .9  0 0 0 0 .75  2.6 0 0 0 -1.25"/></filter>
          <filter id="cork2" filterUnits="userSpaceOnUse" x="1120" y="195" width="385" height="775"><feTurbulence type="fractalNoise" baseFrequency="0.6" numOctaves="2" seed="21"/><feColorMatrix values="0 0 0 0 .45  0 0 0 0 .3  0 0 0 0 .15  0 2.2 0 0 -1.05"/></filter>
          <filter id="blur6" x="-20%" y="-100%" width="140%" height="300%"><feGaussianBlur stdDeviation="5"/></filter>
          <filter id="blur3" x="-10%" y="-100%" width="120%" height="300%"><feGaussianBlur stdDeviation="3"/></filter>
          <clipPath id="board"><path d="M1126 201 1497 247 1498 960 1126 912Z"/></clipPath>
        </defs>
        <g filter="url(#blur6)" fill="none" stroke="#8d8d8d" opacity=".65">
          <path d="M1107 953 1444 993" stroke-width="9"/>
          <path d="M1208 937 1190 960" stroke-width="8"/>
          <path d="M1385 963 1367 983" stroke-width="8"/>
        </g>
        <path d="M1122 921 1505 970" stroke="#444" stroke-width="6" filter="url(#blur3)"/>
        <path d="M1503 244 1511 236 1512 960 1503 966Z" fill="#fff" stroke="#111" stroke-width="1.3"/>
        <path d="M1121 195 1129 187 1511 236 1503 244Z" fill="#fff" stroke="#111" stroke-width="1.3"/>
        <path d="M1121 195 1503 244 1503 966 1122 917Z" fill="#fff" stroke="#111" stroke-width="1.5"/>
        <path d="M1126 201 1497 247 1498 960 1126 912Z" fill="#b08c66"/>
        <g clip-path="url(#board)">
          <rect x="1120" y="195" width="385" height="775" filter="url(#cork)" opacity=".35"/>
          <rect x="1120" y="195" width="385" height="775" filter="url(#cork2)" opacity=".25"/>
        </g>
        <path d="M1126 201 1497 247 1498 960 1126 912Z" fill="none" stroke="#14100c" stroke-width="3"/>
        <path d="M1126 201 1497 247M1126 912 1498 960" fill="none" stroke="#fff" stroke-width="1" stroke-dasharray="3 3"/>
        <path d="M1127 380 1497 427M1127 735 1497 780" fill="none" stroke="#17120e" stroke-width="2"/>
        <path d="M1216 302V786M1407 326V809" stroke="#1d1611" stroke-width="3.5"/>
        <g fill="#8d8f8d">
          <circle cx="1145" cy="222" r="2.6"/><circle cx="1210" cy="229" r="2.6"/><circle cx="1318" cy="243" r="2.6"/><circle cx="1426" cy="257" r="2.6"/><circle cx="1491" cy="266" r="2.6"/>
          <circle cx="1145" cy="554" r="2.6"/><circle cx="1210" cy="561" r="2.6"/><circle cx="1318" cy="573" r="2.6"/><circle cx="1426" cy="588" r="2.6"/><circle cx="1491" cy="597" r="2.6"/>
          <circle cx="1145" cy="884" r="2.6"/><circle cx="1210" cy="892" r="2.6"/><circle cx="1318" cy="905" r="2.6"/><circle cx="1425" cy="919" r="2.6"/><circle cx="1491" cy="928" r="2.6"/>
        </g>
        <!-- Standouts -->
        <g fill="#fbfbf6" stroke="#333">
          <path d="M1172 345 1217 309 1218 324 1175 358 1172 358Z"/>
          <path d="M1363 369 1408 333 1409 347 1366 383 1363 383Z"/>
          <path d="M1177 520 1215 487 1217 501 1192 522Z"/>
          <path d="M1368 543 1407 511 1408 523 1382 544Z"/>
        </g>
        <path d="M1175 345v13M1366 369v14" stroke="#333"/>
        <path d="M1185 336 1212 315M1376 360 1403 339M1190 510 1212 493M1381 533 1403 517" stroke="#444" stroke-dasharray="5 3"/>
        <!-- Hang rail -->
        <path d="M1095 508 1462 555 1458 560 1083 511Z" fill="#c9c0b0" stroke="#222"/>
        <path d="M1087 511 1460 558" stroke="#111" stroke-width="3" stroke-dasharray="5 2.5"/>
        <path d="M1083 511 1458 560 1458 571 1083 523Z" fill="#fff" stroke="#222"/>
        <!-- Triad -->
        <path d="M716 977V958" stroke="#2c8a32" stroke-width="3"/>
        <path d="M712 959 716 945 720 959Z" fill="#3aa43a"/>
        <path d="M709 975 734 974" stroke="#b42a24" stroke-width="4"/>
        <path d="M732 968 744 975 732 980Z" fill="#c0342c"/>
        <path d="M716 971 707 981" stroke="#1f2f9e" stroke-width="3"/>
        <circle cx="709" cy="979" r="4.5" fill="#1f2f9e"/>
        <path d="M706 984 703 991" stroke="#1f2f9e"/>
        <text x="712" y="940" font-family="Liberation Sans" font-size="10" fill="#3a8a3a">Y</text>
        <text x="743" y="979" font-family="Liberation Sans" font-size="10" fill="#b04040">X</text>
        <text x="701" y="996" font-family="Liberation Sans" font-size="8" fill="#1f2f9e">Z</text>
      </svg>

      <!-- Heads-up view toolbar -->
      <div class="absolute top-[6px] left-[459px] h-[20px] flex items-center">
        <svg width="20" height="20" viewBox="0 0 20 20"><circle cx="12" cy="8" r="6.5" fill="#eef2f4" stroke="#888"/><path d="M7 13l-5 6" stroke="#4d8fb5" stroke-width="3"/><path d="M12 4v8M8 8h8" stroke="#888" stroke-dasharray="2 2"/></svg>
        <svg class="ml-[5px]" width="20" height="20" viewBox="0 0 20 20"><circle cx="11" cy="9" r="6" fill="#eef2f4" stroke="#888"/><path d="M6 14l-4 5" stroke="#4d8fb5" stroke-width="3"/><rect x="5" y="1" width="14" height="13" fill="none" stroke="#555" stroke-dasharray="3 2"/></svg>
        <svg class="ml-[6px]" width="20" height="20" viewBox="0 0 20 20"><path d="M1 14 13 2l4 3L6 17Z" fill="#d0d3d5" stroke="#888"/><path d="M10 14h9M13 11l-4 3 4 3" fill="none" stroke="#3f8fbf" stroke-width="2"/></svg>
        <svg class="ml-[7px]" width="20" height="20" viewBox="0 0 20 20"><path d="M1 5a8 3 0 0118 0v13l-6-3V9l-6-.5V16l-6 2Z" fill="#b9c6cd" stroke="#666"/><path d="M2 8l4 8M14 8l4 8" stroke="#2f7ca8"/></svg>
        <svg class="ml-[5px]" width="20" height="20" viewBox="0 0 20 20"><path d="M1 6h12v13H1Z" fill="#82c0df" stroke="#3d6a80"/><path d="M1 6l5-5h13v13l-6 5M13 6l6-5" fill="none" stroke="#444"/><path d="M14 10l4 2-4 2" fill="none" stroke="#333"/></svg>
        <svg class="ml-[6px]" width="5" height="3"><use href="#drop" opacity=".55"/></svg>
        <svg class="ml-[9px]" width="16" height="20" viewBox="0 0 16 20"><path d="M1 4l5-3 9 2v13l-5 3-9-3Z" fill="#e8f3f9" stroke="#6b7d87"/><path d="M1 4l9 2v13L1 16Z" fill="#6db3d8"/></svg>
        <svg class="ml-[9px]" width="5" height="3"><use href="#drop" opacity=".55"/></svg>
        <svg class="ml-[9px]" width="20" height="18" viewBox="0 0 20 18"><path d="M1 9q9-8 18 0-9 8-18 0Z" fill="#d8dadc" stroke="#999"/><path d="M10 4a5 5 0 000 10Z" fill="#555"/><path d="M10 0v18" stroke="#aaa"/></svg>
        <svg class="ml-[6px]" width="5" height="3"><use href="#drop" opacity=".55"/></svg>
        <svg class="ml-[9px]" width="20" height="20" viewBox="0 0 20 20"><use href="#rgb"/><path d="M8 19l9-9 2 2-9 8Z" fill="#f3d65e" stroke="#555" stroke-width=".7"/></svg>
        <svg class="ml-[5px]" width="20" height="20" viewBox="0 0 20 20"><circle cx="10" cy="8" r="7" fill="#d63a2f"/><path d="M3 8a7 7 0 017-7v7Z" fill="#3f7fd1"/><path d="M3 8a7 7 0 0014 0Z" fill="#4ea838"/><path d="M1 13h18v6H1Z" fill="#f2f2f2" stroke="#333"/><path d="M1 13h6v3H1ZM7 16h6v3H7ZM13 13h6v3h-6Z" fill="#222"/></svg>
        <svg class="ml-[7px]" width="5" height="3"><use href="#drop" opacity=".55"/></svg>
        <svg class="ml-[9px]" width="20" height="18" viewBox="0 0 20 18"><rect x="1" y="1" width="18" height="12" fill="#d6d8da" stroke="#555"/><path d="M10 13v3M5 17h10" stroke="#444" stroke-width="2"/></svg>
        <svg class="ml-[8px]" width="5" height="3"><use href="#drop" opacity=".55"/></svg>
      </div>

      <!-- View window buttons -->
      <div class="absolute top-[8px] left-[1113px] flex items-center">
        <svg width="12" height="14" viewBox="0 0 12 14" fill="none" stroke="#999"><rect x=".5" y=".5" width="11" height="13"/><path d="M4 4v6L1 7Z" fill="#666" stroke="none"/></svg>
        <svg class="ml-[14px]" width="12" height="14" viewBox="0 0 12 14" fill="none" stroke="#999"><rect x=".5" y=".5" width="11" height="13"/><path d="M8 4v6l3-3Z" fill="#666" stroke="none"/></svg>
        <svg class="ml-[14px] mt-[2px]" width="11" height="12" viewBox="0 0 11 12"><path d="M0 9h10v2H0Z" fill="#888"/></svg>
        <svg class="ml-[14px]" width="13" height="12" viewBox="0 0 13 12" fill="none" stroke="#888"><rect x=".5" y="3.5" width="9" height="8"/><path d="M3 3V.5h9.5V8H10"/></svg>
        <svg class="ml-[14px]" width="11" height="11" viewBox="0 0 11 11" fill="none" stroke="#888" stroke-width="1.3"><path d="M0 0l11 11M11 0 0 11"/></svg>
      </div>

      <!-- Task pane -->
      <div class="absolute right-0 top-[46px] w-[26px] flex flex-col border border-r-0 border-[#8f9295] bg-[#a9acaf]">
        <div class="h-[24px] bg-[#dfe2e4] border-b border-[#8f9295] flex items-center justify-center"><svg width="20" height="20" viewBox="0 0 20 20" fill="#fff" stroke="#245c78" stroke-width="1.3"><path d="M1 10 10 1l9 9M4 9v10h12V9"/><path d="M8 19v-6h4v6"/></svg></div>
        <div class="h-[24px] border-b border-[#8f9295] flex items-center justify-center"><svg width="18" height="20" viewBox="0 0 18 20" fill="#fff" stroke="#333"><path d="M2 4l3-2 3 1 3-2 4 2v14l-4 2-3-1-3 1-3-2Z"/><path d="M6 4v14M9 3v15M12 3v15"/></svg></div>
        <div class="h-[24px] border-b border-[#8f9295] flex items-center justify-center"><svg width="20" height="18" viewBox="0 0 20 18" fill="#f4f4f2" stroke="#333"><path d="M1 16V2h6l2 2h7v3"/><path d="M1 16l4-9h14l-3 9Z"/></svg></div>
        <div class="h-[24px] border-b border-[#8f9295] flex items-center justify-center"><svg width="20" height="18" viewBox="0 0 20 18" stroke="#333"><rect x=".5" y=".5" width="19" height="17" fill="#fbf6dd"/><path d="M4 3h6v4H8v3h5v4H3v-4h3V7H4Z" fill="#f0c030"/><rect x="14" y="3" width="4" height="3" fill="#f0c030"/><rect x="14" y="9" width="3" height="6" fill="#999"/></svg></div>
        <div class="h-[24px] border-b border-[#8f9295] flex items-center justify-center"><svg width="20" height="20" viewBox="0 0 20 20"><use href="#rgb"/></svg></div>
        <div class="h-[24px] border-b border-[#8f9295] flex items-center justify-center"><svg width="19" height="18" viewBox="0 0 19 18"><rect x=".5" y=".5" width="18" height="17" fill="#f4f6f7" stroke="#225f80"/><path d="M0 0h19v3H0Z" fill="#2f86b5"/><g fill="#4d9bc1"><rect x="2" y="6" width="3" height="2"/><rect x="2" y="10" width="3" height="2"/><rect x="2" y="14" width="3" height="2"/></g><path d="M7 7h9M7 11h9M7 15h9" stroke="#333"/></svg></div>
        <div class="h-[21px] flex items-center justify-center"><svg width="20" height="18" viewBox="0 0 20 18"><path d="M1 1h13v9H6l-3 3v-3H1Z" fill="#4a9ccc" stroke="#225f80"/><path d="M8 7h11v7h-1v3l-3-3H8Z" fill="#f0f2f3" stroke="#666"/></svg></div>
      </div>

      <span class="absolute left-[11px] bottom-0 text-[13px] leading-[16px] font-medium text-[#111]">*Dimetric</span>
    </main>
  </div>

  <!-- Selection filter toolbar -->
  <div class="h-[34px] shrink-0 flex items-center bg-[#d6dadd] relative">
    <span class="ml-[4px] h-[26px] border-l border-dotted border-[#888]"></span>
    <svg class="ml-[14px]" width="14" height="16" viewBox="0 0 14 16"><path d="M1 1h12L8 8v7L6 13V8Z" fill="#e4e6e8" stroke="#adb0b3"/></svg>
    <svg class="ml-[12px]" width="18" height="18" viewBox="0 0 18 18" fill="#e4e6e8" stroke="#adb0b3"><path d="M1 1h11L8 6v6L6 11V6Z"/><path d="M7 7h10l-4 4v6l-2-1v-5Z"/></svg>
    <svg class="ml-[9px]" width="18" height="20" viewBox="0 0 18 20" fill="#a45dbb" stroke="#4d2a60"><path d="M1 1h11L8 5v4L6 8V5Z"/><path d="M4 5h11l-4 4v4L9 12V9Z"/><path d="M7 9h10l-4 4v6l-2-1v-5Z"/></svg>
    <div class="ml-[5px] w-[41px] h-[28px] flex border border-[#8f9295]">
      <div class="w-[27px] bg-[#a9acaf] flex items-center justify-center"><svg width="13" height="18" viewBox="0 0 15 20"><path d="M2 1v15l4-3 3 6 2-1-3-6h5Z" fill="#fff" stroke="#222"/></svg></div>
      <div class="flex-1 bg-[#e2e4e6] flex items-center justify-center"><svg width="6" height="4"><use href="#drop"/></svg></div>
    </div>
    <svg class="ml-[4px]" width="18" height="18" viewBox="0 0 18 18"><path d="M3 2v10l3-2 2 5 2-1-2-5h4Z" fill="#c0c3c6" stroke="#a5a8ab"/></svg>
    <span class="ml-[7px] h-[24px] border-l border-[#8f9295]"></span>
    <div class="ml-[8px] flex items-center">
      <svg width="20" height="20" viewBox="0 0 20 20"><circle cx="7" cy="7" r="2.5" fill="#4f9cc9" stroke="#24536f"/><use href="#funnel" x="11" y="12" width="7" height="8"/></svg>
      <svg class="ml-[5px]" width="20" height="20" viewBox="0 0 20 20"><path d="M7 1v18" stroke="#2f6e92" stroke-width="2"/><use href="#funnel" x="11" y="12" width="7" height="8"/></svg>
      <svg class="ml-[8px]" width="20" height="20" viewBox="0 0 20 20"><rect x="1" y="1" width="14" height="14" fill="#4a93c0" stroke="#24536f"/><use href="#funnel" x="11" y="12" width="7" height="8"/></svg>
      <svg class="ml-[9px]" width="20" height="20" viewBox="0 0 20 20"><path d="M1 9 9 1l6 3-3 6 2 6-6 1Z" fill="#e98f2c" stroke="#8a4f10"/><use href="#funnel" x="11" y="12" width="7" height="8"/></svg>
      <svg class="ml-[6px]" width="20" height="20" viewBox="0 0 20 20"><use href="#part" width="17" height="17"/><use href="#funnel" x="12" y="12" width="7" height="8"/></svg>
      <svg class="ml-[6px]" width="20" height="20" viewBox="0 0 20 20"><path d="M2 17 14 2" stroke="#2f6e92" stroke-width="1.4" stroke-dasharray="5 1.5"/><use href="#funnel" x="11" y="12" width="7" height="8"/></svg>
      <svg class="ml-[5px]" width="20" height="20" viewBox="0 0 20 20"><path d="M2 6l9-4v11l-9 4Z" fill="#72b6dc" stroke="#24536f"/><path d="M6 1v18" stroke="#24536f" stroke-dasharray="3 1"/><use href="#funnel" x="11" y="12" width="7" height="8"/></svg>
      <svg class="ml-[9px]" width="20" height="20" viewBox="0 0 20 20"><rect x="4" y="4" width="6" height="6" fill="#4f9cc9" stroke="#24536f"/><use href="#funnel" x="11" y="12" width="7" height="8"/></svg>
      <svg class="ml-[7px]" width="20" height="20" viewBox="0 0 20 20"><path d="M14 2H3v14h10" fill="none" stroke="#4f9cc9" stroke-width="2"/><use href="#funnel" x="11" y="12" width="7" height="8"/></svg>
      <svg class="ml-[8px]" width="20" height="20" viewBox="0 0 20 20" fill="#fff" stroke="#333"><path d="M4 3h12M4 3v15" fill="none"/><rect x="2" y="1" width="4" height="4"/><rect x="14" y="1" width="4" height="4"/><rect x="2" y="15" width="4" height="4"/><use href="#funnel" x="11" y="12" width="7" height="8"/></svg>
      <svg class="ml-[8px]" width="20" height="20" viewBox="0 0 20 20"><path d="M2 17 14 3" stroke="#333" stroke-width="1.2"/><circle cx="8" cy="10" r="2.5" fill="#fff" stroke="#3d80a8"/><use href="#funnel" x="11" y="12" width="7" height="8"/></svg>
      <svg class="ml-[8px]" width="20" height="20" viewBox="0 0 20 20" fill="none" stroke="#2c6d94"><circle cx="9" cy="9" r="6"/><circle cx="9" cy="9" r="2.5" fill="#2c6d94"/><path d="M9 0v18M0 9h18" stroke="#555"/><use href="#funnel" x="12" y="12" width="7" height="8"/></svg>
      <svg class="ml-[6px]" width="20" height="20" viewBox="0 0 20 20" fill="#fff" stroke="#444"><rect x="1" y="2" width="7" height="15"/><path d="M8 6h7v5H8"/><path d="M3 6h3M3 10h3"/><use href="#funnel" x="12" y="12" width="7" height="8"/></svg>
      <svg class="ml-[6px]" width="20" height="20" viewBox="0 0 20 20"><path d="M2 8l6-6 7 7-6 6Z" fill="#fff" stroke="#333" stroke-width="1.4"/><circle cx="7" cy="7" r="1.5" fill="#2c6d94"/><use href="#funnel" x="12" y="12" width="7" height="8"/></svg>
      <svg class="ml-[8px]" width="20" height="20" viewBox="0 0 20 20"><path d="M1 11l3 6L8 2h9" fill="none" stroke="#222" stroke-width="1.5"/><use href="#funnel" x="12" y="12" width="7" height="8"/></svg>
      <svg class="ml-[7px]" width="20" height="20" viewBox="0 0 20 20" fill="#fff" stroke="#333"><rect x="0" y="2" width="18" height="9"/><rect x="2" y="4" width="5" height="5"/><path d="M10 5h5M10 8h5"/><use href="#funnel" x="12" y="12" width="7" height="8"/></svg>
      <svg class="ml-[8px]" width="20" height="20" viewBox="0 0 20 20" fill="none" stroke="#444"><circle cx="11" cy="7" r="6"/><path d="M7 12l-5 6" stroke-width="2"/><path d="M9 10V4l4 6V4" stroke="#2c6d94"/><use href="#funnel" x="13" y="12" width="7" height="8"/></svg>
      <svg class="ml-[3px]" width="20" height="20" viewBox="0 0 20 20"><rect x="2" y="1" width="13" height="13" fill="#fff" stroke="#333"/><path d="M5 12l3-8 3 8M6 9h4" fill="none" stroke="#2c6d94"/><path d="M8 15l3 4H5Z" fill="#333"/><use href="#funnel" x="13" y="12" width="7" height="8"/></svg>
      <svg class="ml-[6px]" width="20" height="20" viewBox="0 0 20 20"><path d="M1 16 7 5l4 5 4-6-3 12Z" fill="#333"/><path d="M11 7l6-3" stroke="#c9c9c9"/><use href="#funnel" x="13" y="12" width="7" height="8"/></svg>
      <svg class="ml-[8px]" width="20" height="20" viewBox="0 0 20 20" stroke="#333" fill="none"><path d="M3 1v7h9"/><path d="M3 11h13M4 13v5M7 13v5M10 13v5M13 13v5"/><use href="#funnel" x="14" y="12" width="6" height="8"/></svg>
      <svg class="ml-[8px]" width="20" height="20" viewBox="0 0 20 20" fill="none" stroke="#444"><path d="M2 12a8 8 0 0116 0Z" fill="#fff"/><path d="M6 11l4-6 4 6" stroke="#2c6d94"/><path d="M10 12v6"/><use href="#funnel" x="14" y="12" width="6" height="8"/></svg>
      <svg class="ml-[7px]" width="20" height="20" viewBox="0 0 20 20" fill="#fff" stroke="#555"><path d="M3 1h12v12l-6 6-6-6Z"/><path d="M6 4v7M12 4v7"/><use href="#funnel" x="13" y="12" width="7" height="8"/></svg>
      <svg class="ml-[6px]" width="20" height="20" viewBox="0 0 20 20"><rect x="1" y="1" width="14" height="14" fill="#fff" stroke="#444"/><path d="M4 12l3-8 3 8M5 9h4" fill="none" stroke="#333"/><use href="#funnel" x="13" y="12" width="7" height="8"/></svg>
      <svg class="ml-[8px]" width="20" height="20" viewBox="0 0 20 20"><circle cx="9" cy="9" r="8" fill="#f5f5f5" stroke="#333"/><path d="M9 9V1a8 8 0 018 8ZM9 9v8a8 8 0 01-8-8Z" fill="#111"/><use href="#funnel" x="13" y="12" width="7" height="8"/></svg>
      <svg class="ml-[12px]" width="20" height="20" viewBox="0 0 20 20"><path d="M0 7h8" stroke="#333"/><rect x="8" y="3" width="8" height="8" fill="#3d9bc9" stroke="#24536f"/><use href="#funnel" x="9" y="12" width="7" height="8"/></svg>
      <svg class="ml-[3px]" width="20" height="20" viewBox="0 0 20 20"><path d="M0 7h20" stroke="#333"/><rect x="6" y="3" width="8" height="8" fill="#3d9bc9" stroke="#24536f"/><use href="#funnel" x="7" y="12" width="7" height="8"/></svg>
    </div>
    <span class="ml-[14px] h-[26px] border-l border-[#b4b7ba]"></span>
  </div>

  <!-- Status bar -->
  <footer class="h-[18px] shrink-0 flex items-center pt-[1px] bg-[#e9e9e9] border-t border-[#8f9295] relative">
    <span class="ml-[1px] tracking-[-.25px]">SOLIDWORKS Professional 2016 x64 Edition</span>
    <div class="ml-auto flex items-center h-full">
      <span>Under Defined</span>
      <span class="ml-[7px] h-[14px] border-l border-[#cfcfcf]"></span>
      <span class="ml-[9px]">Editing Assembly</span>
      <span class="ml-[7px] h-[14px] border-l border-[#cfcfcf]"></span>
      <span class="ml-[16px] h-[14px] border-l border-[#cfcfcf]"></span>
      <span class="ml-[38px]">IPS</span>
      <svg class="ml-[26px]" width="6" height="4"><path d="M0 4h6L3 0Z" fill="#444"/></svg>
      <svg class="ml-[68px] mr-[3px]" width="16" height="16" viewBox="0 0 16 16" fill="none" stroke="#555"><path d="M2 5l7-4 6 6-7 8-6-5Z"/><path d="M5 6l5 5M7 4l5 5"/></svg>
    </div>
  </footer>
</body>
</html>
